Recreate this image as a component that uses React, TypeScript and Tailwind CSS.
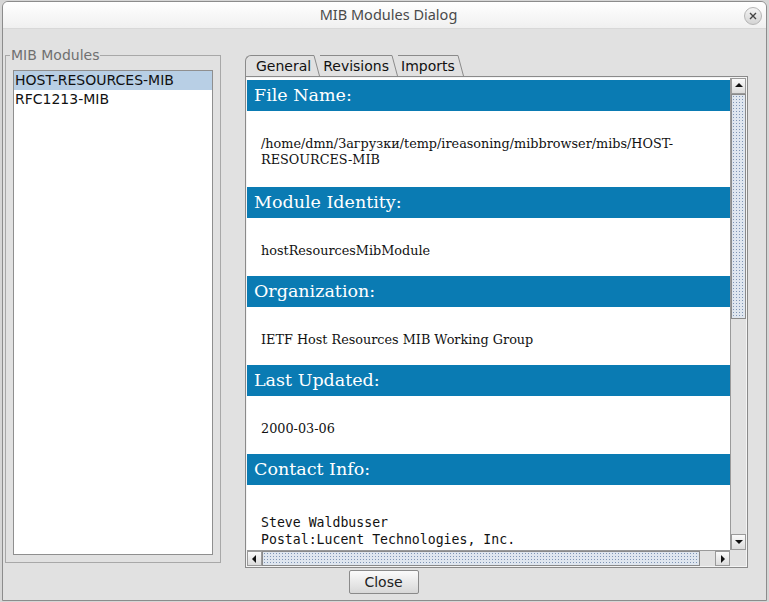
import React from "react";

const dots =
  "bg-[#dfe6ef] bg-[radial-gradient(circle,#7f95b5_0.7px,transparent_1px)] bg-[length:3px_3px]";

function Tri({ dir }: { dir: "up" | "down" | "left" | "right" }) {
  const pts: Record<string, string> = {
    up: "1,6 9,6 5,2",
    down: "1,3 9,3 5,7",
    left: "6,1 6,9 2,5",
    right: "3,1 3,9 7,5",
  };
  return (
    <svg width="10" height="10" viewBox="0 0 10 10">
      <polygon points={pts[dir]} fill="#111" />
    </svg>
  );
}

function ArrowBtn({ dir }: { dir: "up" | "down" | "left" | "right" }) {
  return (
    <div className="flex items-center justify-center border border-[#9a9a9a] bg-gradient-to-b from-[#fafafa] to-[#dcdcdc] w-full h-full">
      <Tri dir={dir} />
    </div>
  );
}

function Header({ children }: { children: React.ReactNode }) {
  return (
    <div
      className="h-[31px] bg-[#0a7bb3] text-white text-[17.5px] leading-[31px] pl-[7px]"
      style={{ fontFamily: '"DejaVu Serif", serif' }}
    >
      {children}
    </div>
  );
}

function Body({ children, extra }: { children: React.ReactNode; extra?: boolean }) {
  return (
    <div
      className={
        "pt-[25px] pl-[14px] pr-[40px] text-[12.8px] leading-[16px] text-[#111] bg-white " +
        (extra ? "pb-[19px]" : "pb-[17px]")
      }
      style={{ fontFamily: '"DejaVu Serif", serif' }}
    >
      {children}
    </div>
  );
}

function Tab({ label, first }: { label: string; first?: boolean }) {
  return (
    <div className="flex h-[21px] items-stretch">
      <div
        className={
          "flex items-center border-t border-[#8a8a8a] text-[14px] text-[#111] " +
          (first ? "border-l rounded-tl-[6px] pl-[10px] pr-[2px]" : "pl-[3px] pr-[2px]")
        }
      >
        {label}
      </div>
      <svg width="7" height="21" viewBox="0 0 7 21" className="block">
        <path d="M0 0.5 L1 0.5 L6.5 21" stroke="#8a8a8a" fill="none" strokeWidth="1" />
      </svg>
    </div>
  );
}

export default function App() {
  return (
    <div
      className="w-[769px] h-[602px] bg-[#d6d6d6] pl-[2px] pt-[1px] overflow-hidden"
      style={{ fontFamily: '"DejaVu Sans", sans-serif' }}
    >
      <div className="w-[765px] h-[600px] border border-[#8c8c8c] rounded-t-[6px] flex flex-col overflow-hidden">
        {/* title bar */}
        <div className="relative h-[27px] bg-gradient-to-b from-white to-[#f0f0f0] border-b border-[#d8d8d8] flex items-center justify-center pl-[8px]">
          <span
            className="text-[14.5px] text-[#4a4a4a]"
            style={{ fontFamily: '"Noto Sans", "Open Sans", sans-serif' }}
          >
            MIB Modules Dialog
          </span>
          <div className="absolute right-[4px] top-[5px] w-[18px] h-[18px] rounded-full border border-[#b5b5b5] bg-gradient-to-b from-[#f4f4f4] to-[#d4d4d4] flex items-center justify-center">
            <svg width="8" height="8" viewBox="0 0 8 8">
              <path d="M1 1 L7 7 M7 1 L1 7" stroke="#444" strokeWidth="1.4" />
            </svg>
          </div>
        </div>

        {/* body */}
        <div className="flex-1 bg-[#e1e1e1] flex flex-col">
          <div className="flex items-start pl-[2px]">
            {/* left titled border */}
            <div className="relative mt-[26px] w-[216px] h-[508px] border border-[#a8a8a8] pt-[14px] px-[7px] pb-[7px]">
              <span className="absolute left-[4px] top-[-10px] px-[1px] bg-[#e1e1e1] text-[14px] leading-[18px] text-[#707070]">
                MIB Modules
              </span>
              <div className="h-full bg-white border border-[#8f8f8f] text-[14px] leading-[19px] text-[#111]">
                <div className="bg-[#b8cfe5] pl-[1px] h-[19px]">HOST-RESOURCES-MIB</div>
                <div className="pl-[1px] h-[19px]">RFC1213-MIB</div>
              </div>
            </div>

            {/* right tabbed pane */}
            <div className="ml-[24px] mt-[25px] w-[503px] flex flex-col">
              <div className="flex h-[22px] items-end">
                <Tab label="General" first />
                <Tab label="Revisions" />
                <Tab label="Imports" />
              </div>
              <div className="h-[492px] border border-[#8a8a8a] p-[1px] bg-[#f4f4f4] grid grid-cols-[1fr_16px] grid-rows-[1fr_16px]">
                {/* viewport */}
                <div className="overflow-hidden bg-white pt-[2px]">
                  <Header>File Name:</Header>
                  <Body extra>
                    /home/dmn/Загрузки/temp/ireasoning/mibbrowser/mibs/HOST-RESOURCES-MIB
                  </Body>
                  <Header>Module Identity:</Header>
                  <Body>hostResourcesMibModule</Body>
                  <Header>Organization:</Header>
                  <Body>IETF Host Resources MIB Working Group</Body>
                  <Header>Last Updated:</Header>
                  <Body>2000-03-06</Body>
                  <Header>Contact Info:</Header>
                  <pre
                    className="pt-[29px] pl-[14px] text-[13.2px] leading-[17px] text-[#111]"
                    style={{ fontFamily: '"DejaVu Sans Mono", monospace' }}
                  >
{`Steve Waldbusser
Postal:Lucent Technologies, Inc.
       1213 Innsbruck Dr.`}
                  </pre>
                </div>
                {/* vertical scrollbar */}
                <div className="flex flex-col bg-[#e1e1e1] border-l border-[#9a9a9a]">
                  <div className="h-[16px]">
                    <ArrowBtn dir="up" />
                  </div>
                  <div className={"h-[225px] border border-[#8a8a8a] " + dots}></div>
                  <div className="flex-1"></div>
                  <div className="h-[16px]">
                    <ArrowBtn dir="down" />
                  </div>
                </div>
                {/* horizontal scrollbar */}
                <div className="flex bg-[#e1e1e1] border-t border-[#9a9a9a]">
                  <div className="w-[15px]">
                    <ArrowBtn dir="left" />
                  </div>
                  <div className={"w-[438px] border border-[#8a8a8a] " + dots}></div>
                  <div className="flex-1"></div>
                  <div className="w-[15px]">
                    <ArrowBtn dir="right" />
                  </div>
                </div>
                <div className="bg-[#e1e1e1]"></div>
              </div>
            </div>
          </div>

          <div className="flex justify-center mt-[2px] pr-[2px]">
            <button className="w-[70px] h-[24px] border border-[#8a8a8a] rounded-[2px] bg-gradient-to-b from-[#fbfbfb] to-[#d8d8d8] text-[14px] text-[#222]">
              Close
            </button>
          </div>
        </div>
      </div>
    </div>
  );
}
